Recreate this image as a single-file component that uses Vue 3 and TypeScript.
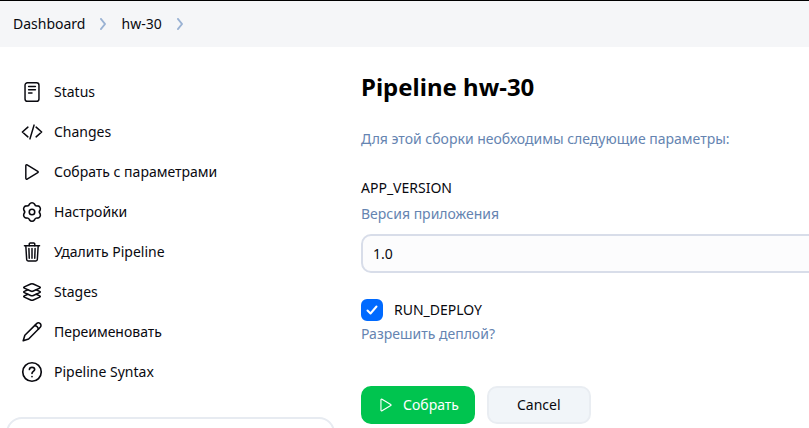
<script setup lang="ts">
import { ref } from 'vue'

interface Task {
  label: string
  viewBox: string
  stroke: number
  paths: string[]
}

const playPath =
  'M112 111v290c0 17.44 17 28.52 31 20.16l247.9-148.37c12.12-7.25 12.12-26.33 0-33.58L143 90.84c-14-8.36-31 2.72-31 20.16z'

const tasks: Task[] = [
  {
    label: 'Status',
    viewBox: '0 0 24 24',
    stroke: 1.6,
    paths: [
      'M7 1.900h10a2.600 2.600 0 0 1 2.600 2.600v15a2.600 2.600 0 0 1-2.600 2.600H7a2.600 2.600 0 0 1-2.600-2.600v-15A2.600 2.600 0 0 1 7 1.900z',
      'M8.300 6h7.400M8.300 9.500h7.400M8.300 13h3.700',
    ],
  },
  {
    label: 'Changes',
    viewBox: '0 0 512 512',
    stroke: 36,
    paths: ['M160 368L32 256l128-112M352 368l128-112-128-112M304 96l-96 320'],
  },
  { label: 'Собрать с параметрами', viewBox: '0 0 512 512', stroke: 34, paths: [playPath] },
  {
    label: 'Настройки',
    viewBox: '0 0 24 24',
    stroke: 1.7,
    paths: [
      'M9.340 3.300A3.300 3.300 0 0 1 14.660 3.300A3 3 0 0 0 18.210 5.340A3.300 3.300 0 0 1 20.870 9.950A3 3 0 0 0 20.870 14.050A3.300 3.300 0 0 1 18.210 18.660A3 3 0 0 0 14.660 20.700A3.300 3.300 0 0 1 9.340 20.700A3 3 0 0 0 5.790 18.660A3.300 3.300 0 0 1 3.130 14.050A3 3 0 0 0 3.130 9.950A3.300 3.300 0 0 1 5.790 5.340A3 3 0 0 0 9.340 3.300z',
      'M15 12a3 3 0 1 1-6 0a3 3 0 0 1 6 0z',
    ],
  },
  {
    label: 'Удалить Pipeline',
    viewBox: '0 0 512 512',
    stroke: 34,
    paths: [
      'M112 112l20 320c.95 18.49 14.4 32 32 32h184c17.67 0 30.87-13.51 32-32l20-320M80 112h352',
      'M192 112V72a23.93 23.93 0 0 1 24-24h80a23.93 23.93 0 0 1 24 24v40M256 176v224M184 176l8 224M328 176l-8 224',
    ],
  },
  {
    label: 'Stages',
    viewBox: '0 0 512 512',
    stroke: 36,
    paths: [
      'M434.8 137.65l-149.36-68.1c-16.19-7.4-42.69-7.4-58.88 0L77.3 137.65c-17.6 8-17.6 21.09 0 29.09l148 67.5c16.89 7.7 44.69 7.7 61.58 0l148-67.5c17.52-8 17.52-21.1-.08-29.09z',
      'M160 308.52l-82.7 37.11c-17.6 8-17.6 21.1 0 29.1l148 67.5c16.89 7.69 44.69 7.69 61.58 0l148-67.5c17.6-8 17.6-21.1 0-29.1l-79.94-38.47',
      'M160 204.48l-82.8 37.16c-17.6 8-17.6 21.1 0 29.1l148 67.49c16.89 7.7 44.69 7.7 61.58 0l148-67.49c17.7-8 17.7-21.1.1-29.1L352 204.48',
    ],
  },
  {
    label: 'Переименовать',
    viewBox: '0 0 24 24',
    stroke: 1.7,
    paths: [
      'M2.400 21.600l1.800-6L17 2.900a2.650 2.650 0 0 1 4 3.900L8.300 19.700z',
      'M15 4.900c2 .5 3.600 2 4.100 4',
    ],
  },
  {
    label: 'Pipeline Syntax',
    viewBox: '0 0 24 24',
    stroke: 1.8,
    paths: [
      'M22.100 12a10.100 10.100 0 1 1-20.200 0a10.100 10.100 0 0 1 20.200 0z',
      'M9.200 9.200C9.300 7.700 10.500 6.900 12 6.900s2.900.9 2.900 2.400c0 2.100-2.900 2.100-2.900 4.200',
      'M12 16.900v.2',
    ],
  },
]

const appVersion = ref<string>('1.0')
const runDeploy = ref<boolean>(true)
</script>

<template>
  <div class="page">
    <nav class="breadcrumbs" aria-label="Breadcrumb">
      <a href="#">Dashboard</a>
      <svg class="chevron" viewBox="0 0 8 12"><path d="M2 1l4 5-4 5" /></svg>
      <a href="#">hw-30</a>
      <svg class="chevron" viewBox="0 0 8 12"><path d="M2 1l4 5-4 5" /></svg>
    </nav>

    <div class="body">
      <aside class="side">
        <nav class="tasks">
          <a v-for="task in tasks" :key="task.label" class="task" href="#">
            <svg class="icon" :viewBox="task.viewBox" :stroke-width="task.stroke">
              <path v-for="d in task.paths" :key="d" :d="d" />
            </svg>
            <span>{{ task.label }}</span>
          </a>
        </nav>
        <section class="card"></section>
      </aside>

      <main class="main">
        <h1>Pipeline hw-30</h1>
        <p class="hint intro">Для этой сборки необходимы следующие параметры:</p>

        <form @submit.prevent>
          <div class="field">
            <label for="app-version">APP_VERSION</label>
            <p class="hint">Версия приложения</p>
            <input id="app-version" v-model="appVersion" class="text" type="text" />
          </div>

          <div class="field">
            <div class="check">
              <span class="box">
                <input id="run-deploy" v-model="runDeploy" type="checkbox" />
                <svg class="tick" viewBox="0 0 22 22"><path d="M6.500 11.500l3 3 6-7" /></svg>
              </span>
              <label for="run-deploy">RUN_DEPLOY</label>
            </div>
            <p class="hint">Разрешить деплой?</p>
          </div>

          <div class="actions">
            <button class="button primary" type="submit">
              <svg class="play" viewBox="0 0 512 512" stroke-width="32"><path :d="playPath" /></svg>
              Собрать
            </button>
            <button class="button" type="button">Cancel</button>
          </div>
        </form>
      </main>
    </div>
  </div>
</template>

<style>
body {
  background: #fff;
}
</style>

<style scoped>
.page {
  display: flex;
  flex-direction: column;
  height: 100vh;
  overflow: hidden;
  box-sizing: border-box;
  border-top: 1px solid #000;
  color: #09090f;
  font: 14px/20px 'Noto Sans', sans-serif;
}

a {
  color: inherit;
  text-decoration: none;
}

h1,
p {
  margin: 0;
}

svg {
  flex: none;
  fill: none;
  stroke: currentColor;
  stroke-linecap: round;
  stroke-linejoin: round;
}

.breadcrumbs {
  display: flex;
  flex: none;
  align-items: center;
  gap: 14px;
  padding: 13px;
  background: #f5f6f8;
}

.chevron {
  width: 8px;
  height: 12px;
  color: #9ab2d3;
  stroke-width: 2;
}

.body {
  display: flex;
  flex: 1;
  min-height: 0;
}

.side {
  display: flex;
  flex: none;
  flex-direction: column;
  gap: 25px;
  width: 329px;
  padding: 25px 0 0 6px;
}

.tasks {
  display: flex;
  flex-direction: column;
}

.task {
  display: flex;
  align-items: center;
  gap: 11px;
  height: 40px;
  padding-left: 15px;
}

.icon {
  width: 22px;
  height: 22px;
}

.card {
  flex: none;
  height: 120px;
  box-sizing: border-box;
  border: 2px solid #e7ebf1;
  border-radius: 16px;
}

.main {
  flex: 1;
  min-width: 0;
  padding: 24px 0 0 26px;
}

h1 {
  color: #000;
  font-size: 24px;
  font-weight: 700;
  line-height: 32px;
}

.hint {
  color: #6584b1;
}

.intro {
  margin: 26px 0 28px;
}

.field {
  margin-bottom: 26px;
}

.field .hint {
  margin-top: 5px;
}

.field label {
  display: block;
  line-height: 22px;
}

.text {
  display: block;
  width: calc(100% + 24px);
  height: 39px;
  box-sizing: border-box;
  margin: 10px 0 0;
  padding: 0 10px;
  border: 2px solid #d8dde9;
  border-radius: 10px;
  background: #fcfcfd;
  color: inherit;
  font: inherit;
}

.check {
  display: flex;
  align-items: center;
  gap: 11px;
}

.field .check + .hint {
  margin-top: 3px;
}

.box {
  display: grid;
  width: 22px;
  height: 22px;
}

.box > * {
  grid-area: 1 / 1;
}

.box input {
  width: 22px;
  height: 22px;
  margin: 0;
  appearance: none;
  border: 2px solid #d8dde9;
  border-radius: 6px;
  background: #fcfcfd;
}

.box input:checked {
  border-color: #006aff;
  background: #006aff;
}

.tick {
  visibility: hidden;
  color: #fff;
  pointer-events: none;
  stroke-width: 2;
}

.box input:checked + .tick {
  visibility: visible;
}

.actions {
  display: flex;
  gap: 12px;
  margin-top: 42px;
}

.button {
  display: flex;
  align-items: center;
  justify-content: center;
  gap: 8px;
  height: 38px;
  padding: 0 28px;
  border: 2px solid #e9edf2;
  border-radius: 10px;
  background: #f1f5f9;
  color: inherit;
  font: inherit;
}

.primary {
  padding: 0 14px;
  border-color: #00c44f;
  background: #00c44f;
  color: #fff;
}

.play {
  width: 18px;
  height: 18px;
}
</style>
